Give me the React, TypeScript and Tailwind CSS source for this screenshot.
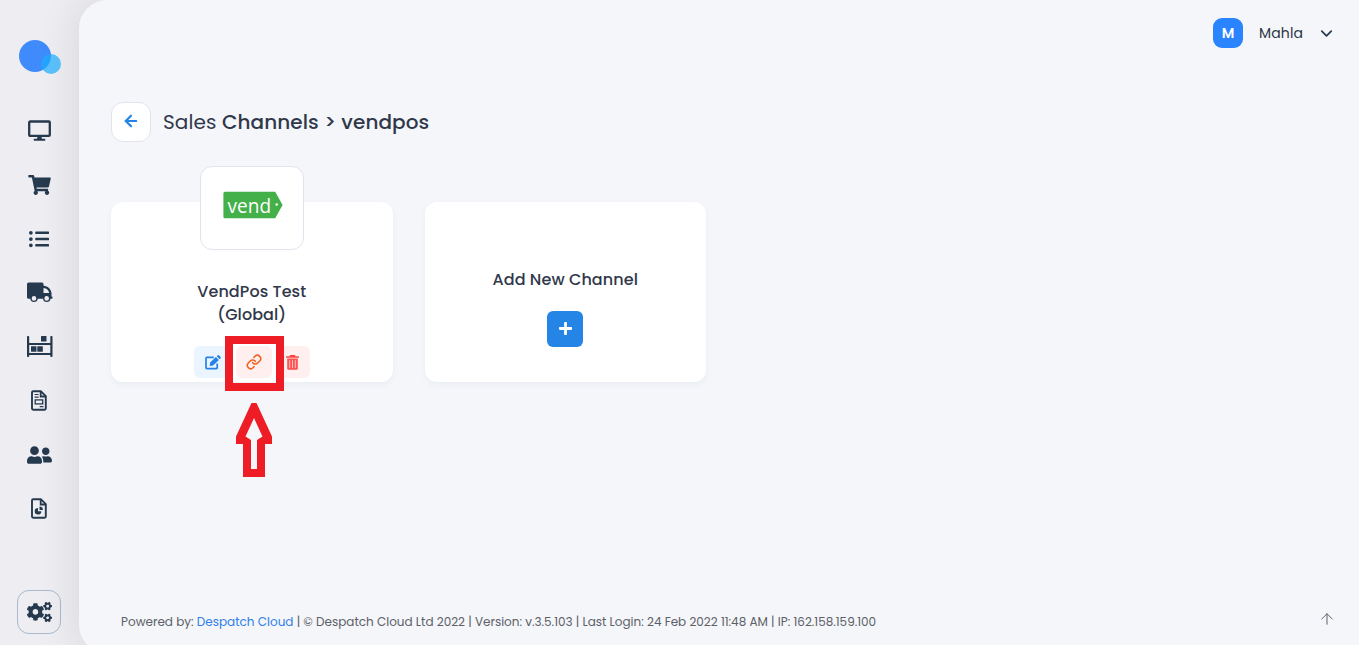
import React from 'react';
import { ArrowLeft, ArrowUp, ChevronDown, Link } from 'lucide-react';
import { FaCogs, FaListUl, FaPlus, FaShoppingCart, FaUserFriends } from 'react-icons/fa';

const DesktopIcon = () => (
  <svg width="23" height="21" viewBox="0 0 23 21" fill="none">
    <rect x="1.200" y="1.500" width="20.600" height="14.400" rx="1" stroke="currentColor" strokeWidth="2.300" />
    <path d="M9.600 16.500h3.800l.6 2.200h2.400a1 1 0 0 1 0 2H6.600a1 1 0 0 1 0-2H9z" fill="currentColor" />
  </svg>
);

const TruckIcon = () => (
  <svg className="ml-px" width="26" height="21" viewBox="0 0 26 21">
    <path
      fillRule="evenodd"
      fill="currentColor"
      d="M1.600 .5h13.300q1.600 0 1.600 1.600v1.700c4.500.2 7.400 3.300 8 7.200v3.400h.3a.7.700 0 0 1 .7.700v1a.7.700 0 0 1-.7.700h-1.300a3.800 3.800 0 0 1-7.500 0h-5.200a3.800 3.800 0 0 1-7.500 0H1.600Q0 16.800 0 15.200V2.100Q0 .5 1.600 .5zM16.500 6v5h5.700c-.5-2.800-2.500-4.800-5.700-5zM7 14.100a2.300 2.300 0 1 0 0 4.600 2.300 2.300 0 0 0 0-4.600zM19.700 14.100a2.300 2.300 0 1 0 0 4.600 2.300 2.300 0 0 0 0-4.600z"
    />
  </svg>
);

const ShelvesIcon = () => (
  <svg className="ml-px" width="26" height="21" viewBox="0 0 26 21" fill="currentColor">
    <rect x="0" y="0" width="2.200" height="21" rx=".8" />
    <rect x="23.300" y="0" width="2.200" height="21" rx=".8" />
    <rect x="1" y="7" width="24" height="2" />
    <rect x="1" y="17" width="24" height="2" />
    <rect x="14" y="0" width="5.500" height="5.500" rx=".5" />
    <rect x="4" y="10.200" width="5.500" height="5.500" rx=".5" />
    <rect x="10.300" y="10.200" width="5.500" height="5.500" rx=".5" />
  </svg>
);

const InvoiceIcon = () => (
  <svg width="16" height="21" viewBox="0 0 16 21" fill="none" stroke="currentColor">
    <path d="M2.200 1.200h7.600l5 5v12.300a1.200 1.200 0 0 1-1.200 1.200H2.200A1.200 1.200 0 0 1 1 18.500V2.400a1.200 1.200 0 0 1 1.200-1.200z" strokeWidth="1.900" />
    <path d="M9.700 1.500v5h5" strokeWidth="1.800" />
    <path d="M3.600 4.500h4M3.600 7.200h4M8.700 16.700h3.700" strokeWidth="1.200" />
    <rect x="4.200" y="9.900" width="7.500" height="4" strokeWidth="1.300" />
  </svg>
);

const ReportIcon = () => (
  <svg width="16" height="21" viewBox="0 0 16 21" fill="none" stroke="currentColor">
    <path d="M2.200 1.200h7.600l5 5v12.300a1.200 1.200 0 0 1-1.200 1.200H2.200A1.200 1.200 0 0 1 1 18.500V2.400a1.200 1.200 0 0 1 1.200-1.200z" strokeWidth="1.900" />
    <path d="M9.700 1.500v5h5" strokeWidth="1.800" />
    <path d="M7 10v3.200h3.300a3.300 3.300 0 1 1-3.300-3.200z" fill="currentColor" stroke="none" />
    <path d="M8.500 8.600a3.400 3.400 0 0 1 3.400 3.400H8.500z" fill="currentColor" stroke="none" />
  </svg>
);

const EditIcon = () => (
  <svg width="16" height="15" viewBox="0 0 16 15">
    <path d="M8.800 2.300H1.900a.9.900 0 0 0-.9.900v9.600a.9.900 0 0 0 .9.900h9.400a.9.900 0 0 0 .9-.9V8.600" fill="none" stroke="currentColor" strokeWidth="1.700" />
    <path d="M4.700 10.900l.4-3.300 5.800-5.600 3 3-5.800 5.600zM11.700 1.200l.7-.7a1.200 1.200 0 0 1 1.700 0l1.300 1.300a1.200 1.200 0 0 1 0 1.700l-.7.700z" fill="currentColor" />
  </svg>
);

const TrashIcon = () => (
  <svg width="13" height="15" viewBox="0 0 13 15">
    <path d="M4 0h5l.6 1.200h2.900a.5.500 0 0 1 .5.500v1H0v-1a.5.500 0 0 1 .5-.5h2.900z" fill="#ff4747" />
    <path d="M1.200 3.600h10.600V13.600a1.200 1.200 0 0 1-1.200 1.200H2.400a1.200 1.200 0 0 1-1.200-1.200z" fill="#ff5151" />
    <path d="M3.700 5.200v7.800M6.500 5.200v7.800M9.300 5.200v7.800" stroke="#ffc4c4" strokeWidth="1" />
  </svg>
);

const VendLogo = () => (
  <svg className="ml-0.5" width="60" height="28" viewBox="0 0 60 28">
    <path d="M2 .7h50.200L59.600 14l-7.400 13.300H2a1.600 1.600 0 0 1-1.600-1.600V2.300A1.600 1.600 0 0 1 2 .7z" fill="#43b04a" />
    <text x="4.600" y="21.500" fill="#fff" fontSize="20" textLength="43.500" lengthAdjust="spacingAndGlyphs" fontFamily="'Open Sans', sans-serif">
      vend
    </text>
    <circle cx="53.700" cy="13.500" r="1.200" fill="#fff" />
  </svg>
);

const navItems = [
  { name: 'dashboard', icon: <DesktopIcon /> },
  { name: 'orders', icon: <FaShoppingCart className="mt-px h-5 w-[23px]" /> },
  { name: 'products', icon: <FaListUl size={20} className="mt-px" /> },
  { name: 'shipping', icon: <TruckIcon /> },
  { name: 'warehouse', icon: <ShelvesIcon /> },
  { name: 'invoices', icon: <InvoiceIcon /> },
  { name: 'customers', icon: <FaUserFriends className="mt-px h-5 w-[25px]" /> },
  { name: 'reports', icon: <ReportIcon /> },
];

const Sidebar: React.FC = () => (
  <aside className="flex w-[79px] shrink-0 flex-col items-center pr-px text-[#25394f]">
    <svg className="mt-[39px] ml-0.5" width="44" height="36" viewBox="0 0 44 36">
      <circle cx="17" cy="17" r="16" fill="#408bfc" />
      <circle cx="33" cy="25" r="10" fill="#1caefd" fillOpacity=".7" />
    </svg>
    <nav className="mt-7 flex flex-col">
      {navItems.map(item => (
        <button key={item.name} aria-label={item.name} className="flex h-[54px] w-11 items-center justify-center">
          {item.icon}
        </button>
      ))}
    </nav>
    <button aria-label="settings" className="mt-auto mb-[11px] flex size-11 items-center justify-center rounded-xl border border-[#a9b9cc]">
      <FaCogs className="mb-px h-5 w-[25px]" />
    </button>
  </aside>
);

const Header: React.FC = () => (
  <header className="flex h-[66px] items-center justify-end pr-[23px]">
    <span className="flex size-[30px] items-center justify-center rounded-[9px] bg-[#2a83ff] text-sm font-semibold text-white">M</span>
    <span className="ml-4 text-sm tracking-[0.1px] text-[#2c3444]">Mahla</span>
    <ChevronDown size={19} strokeWidth={2.2} className="ml-3.5 text-[#25394f]" />
  </header>
);

const ChannelCard: React.FC = () => (
  <div className="relative flex h-[180px] flex-col items-center rounded-xl bg-white shadow-[0_3px_6px_rgba(60,70,120,0.05)]">
    <div className="-mt-9 flex h-[84px] w-[104px] shrink-0 items-start justify-center rounded-xl border border-[#e3e3ef] bg-white pt-6">
      <VendLogo />
    </div>
    <h3 className="mt-[30px] text-center text-base leading-[23px] font-medium tracking-[0.08px]">
      VendPos Test
      <br />
      (Global)
    </h3>
    <div className="mt-5 flex gap-1">
      <button aria-label="edit" className="flex h-8 w-[38px] items-center justify-center rounded-md bg-[#ebf5ff] text-[#2583e6]">
        <EditIcon />
      </button>
      <button aria-label="link" className="flex h-8 w-9 items-center justify-center rounded-md bg-[#ffefef] text-[#f4601c]">
        <Link size={16} strokeWidth={2.3} />
      </button>
      <button aria-label="delete" className="flex h-8 w-[34px] items-center justify-center rounded-md bg-[#ffefef]">
        <TrashIcon />
      </button>
    </div>
    {/* callout around the link button */}
    <div className="absolute top-[134px] left-[114px] h-[55px] w-[59px] border-8 border-[#ee1c24]" />
    <svg className="absolute top-[201px] left-[125px]" width="36" height="74" viewBox="0 0 36 74">
      <path
        fill="#ee1c24"
        fillRule="evenodd"
        d="M15.500 0h5L36 33.500V41h-7v33H7V41H0v-7.500zM18 15L9.500 33.500l5.500 3.500V66h6V37l5.500-3.500z"
      />
    </svg>
  </div>
);

const AddChannelCard: React.FC = () => (
  <div className="flex h-[180px] flex-col items-center rounded-xl bg-white shadow-[0_3px_6px_rgba(60,70,120,0.05)]">
    <h3 className="mt-[66px] text-base leading-[23px] font-medium tracking-[0.08px]">Add New Channel</h3>
    <button aria-label="add channel" className="mt-5 flex size-9 items-center justify-center rounded-md bg-[#2485e6] text-white">
      <FaPlus size={15} className="mb-px ml-px" />
    </button>
  </div>
);

const Footer: React.FC = () => (
  <footer className="mt-auto flex h-[47px] items-center justify-between pr-[23px] pl-[42px] text-xs text-[#5d6067]">
    <p className="whitespace-nowrap">
      Powered by: <a className="text-[#3180e8]">Despatch Cloud</a> | © Despatch Cloud Ltd 2022 | Version: v.3.5.103 | Last Login: 24 Feb 2022 11:48 AM | IP:
      162.158.159.100
    </p>
    <ArrowUp size={18} strokeWidth={1.3} className="-mt-1.5" />
  </footer>
);

const App: React.FC = () => {
  return (
    <div className="flex h-[645px] w-[1359px] overflow-hidden bg-[#eeedf1] font-['Poppins','Inter',sans-serif] text-[#30384a]">
      <Sidebar />
      <main className="flex h-[653px] flex-1 flex-col rounded-l-[28px] bg-[#f4f6fa] pb-2 shadow-[0_0_40px_rgba(40,60,80,0.13)]">
        <Header />
        <div className="mt-9 flex items-center pl-8">
          <button aria-label="back" className="flex size-10 items-center justify-center rounded-xl border border-[#e3e3ef] bg-white text-[#2384e8]">
            <ArrowLeft size={18} strokeWidth={2.9} className="mb-0.5" />
          </button>
          <h1 className="ml-3 text-xl tracking-[0.09px]">
            Sales <span className="font-medium">Channels &gt; vendpos</span>
          </h1>
        </div>
        <div className="mt-[60px] ml-8 grid w-[595px] grid-cols-2 gap-8">
          <ChannelCard />
          <AddChannelCard />
        </div>
        <Footer />
      </main>
    </div>
  );
};

export default App;
